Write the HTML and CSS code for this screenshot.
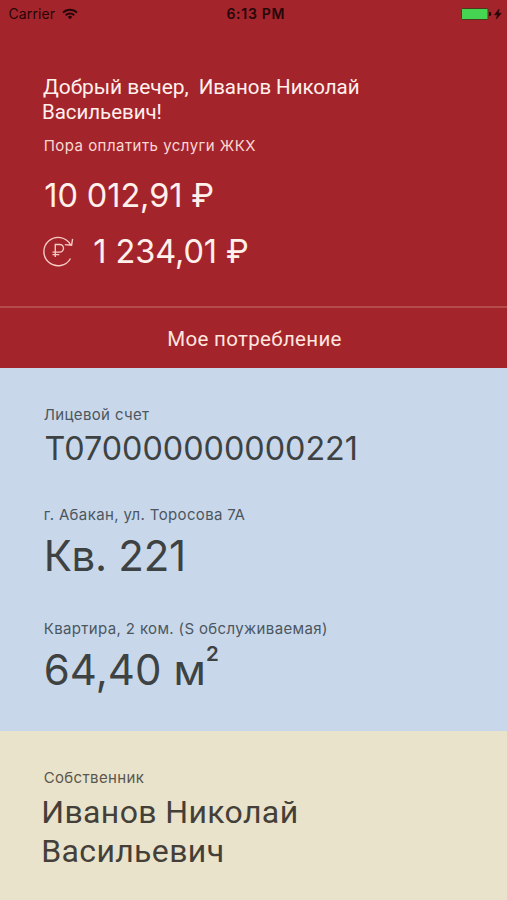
FILE: index.html
```
<!DOCTYPE html>
<html lang="ru">
<head>
<meta charset="utf-8">
<title>ЖКХ</title>
<link rel="stylesheet" href="styles.css">
</head>
<body>
<main class="screen">
  <section class="summary">
    <header class="status">
      <div class="carrier">Carrier
        <svg width="16" height="12" viewBox="0 0 16 12" fill="none" stroke="#250609" stroke-width="1.9"><path d="M1 4.6a10 10 0 0 1 14 0M3.7 7.3a6.2 6.2 0 0 1 8.6 0"/><path d="M8 11.2 5.7 8.9a3.3 3.3 0 0 1 4.6 0z" fill="#250609" stroke="none"/></svg>
      </div>
      <div class="time">6:13 PM</div>
      <div class="power">
        <svg width="41" height="12" viewBox="0 0 41 12"><rect x=".5" y=".5" width="26.5" height="11" rx="1" fill="#46d553" stroke="#4b3b1b"/><path d="M28 4h1.2q1 .5 1 2t-1 2H28z" fill="#250609"/><path d="M38.2 1 33.5 6.8h3L35.3 11l5-5.8h-3z" fill="#250609" stroke="#250609" stroke-width=".6"/></svg>
      </div>
    </header>
    <div class="due">
      <p class="greeting"><span class="hello">Добрый вечер,</span><span>Иванов Николай</span></p>
      <p class="patronymic">Васильевич!</p>
      <p class="note">Пора оплатить услуги ЖКХ</p>
      <p class="amount">10 012,91 ₽</p>
      <div class="recurring">
        <svg width="32" height="32" viewBox="0 0 32 32" fill="none" stroke="#f6c9c4" stroke-width="1.4"><path d="M28.4 9.5A14.2 14.2 0 1 0 28.5 23.5M30.6 3.8 29.6 10.2 22.8 9.6M13.3 22V9.5h4.4a3.8 3.8 0 0 1 0 7.6H10.5M10.5 19.6h6.8"/></svg>
        <p class="amount">1 234,01 ₽</p>
      </div>
    </div>
    <div class="usage">Мое потребление</div>
  </section>
  <section class="flat">
    <p class="label">Лицевой счет</p>
    <p class="account">Т070000000000221</p>
    <p class="label">г. Абакан, ул. Торосова 7А</p>
    <p class="value">Кв. 221</p>
    <p class="label">Квартира, 2 ком. (S обслуживаемая)</p>
    <p class="value area">64,40 м<span class="power-of">2</span></p>
  </section>
  <section class="owner">
    <p class="label">Собственник</p>
    <p class="name">Иванов Николай<br>Васильевич</p>
  </section>
</main>
</body>
</html>
```
FILE: styles.css
```
body, p { margin: 0; }
body { font-family: Inter, "Liberation Sans", sans-serif; }
p { white-space: nowrap; }
.screen { width: 507px; height: 900px; display: flex; flex-direction: column; overflow: hidden; }
svg { display: block; flex: none; }

.summary { height: 368px; background: #a4242b; color: #fff0ec; display: flex; flex-direction: column; }
.status { height: 27px; display: grid; grid-template-columns: 1fr auto 1fr; align-items: center; padding: 0 5px 0 8.5px; color: #250609; font-size: 14px; }
.carrier { display: flex; align-items: center; gap: 7px; letter-spacing: .1px; }
.time { font-weight: 600; letter-spacing: .7px; padding-left: 1px; }
.power { display: flex; justify-content: flex-end; }

.due { flex: 1; padding: 47px 0 0 43px; }
.greeting { display: flex; gap: 10px; font: 20.5px/26px Roboto, sans-serif; letter-spacing: -.05px; }
.hello { font-size: 21px; }
.patronymic { font: 20.5px/24px Roboto, sans-serif; letter-spacing: -.05px; margin-left: -1px; }
.note { font-size: 15px; line-height: 20px; letter-spacing: .47px; margin: 12px 0 0 .7px; color: #f9d8d3; }
.amount { font-size: 32.5px; line-height: 40px; letter-spacing: -.1px; margin: 20px 0 0 1.3px; }
.recurring { display: flex; align-items: center; gap: 18px; margin: 16px 0 0 -1px; }
.recurring svg { margin-top: -3px; }
.recurring .amount { margin-top: 0; }
.usage { height: 62px; border-top: 2px solid #b64b4c; box-sizing: border-box; text-align: center; font: 20.5px/62px Roboto, sans-serif; letter-spacing: .33px; padding-left: 2px; color: #ffe5df; }

.flat { height: 363px; box-sizing: border-box; background: #c8d8ea; color: #3e4242; padding: 37px 0 0 43.7px; }
.label { font-size: 15px; line-height: 20px; letter-spacing: .36px; color: #4c565f; }
.account { font-size: 32.3px; line-height: 40px; margin: 4px 0 36px .7px; }
.value { font-size: 42px; line-height: 50px; letter-spacing: -.3px; margin: 6px 0 38px; }
.area { letter-spacing: .1px; display: flex; }
.area.value { margin-bottom: 0; }
.power-of { font-size: 20.5px; font-weight: 600; line-height: 18px; }

.owner { flex: 1; background: #e9e3cb; color: #443f38; padding: 37px 0 0 43.7px; }
.owner .label { color: #5b564c; }
.name { font: 32px/39.5px Roboto, sans-serif; letter-spacing: .37px; margin: 4.5px 0 0 -2.5px; }
```
